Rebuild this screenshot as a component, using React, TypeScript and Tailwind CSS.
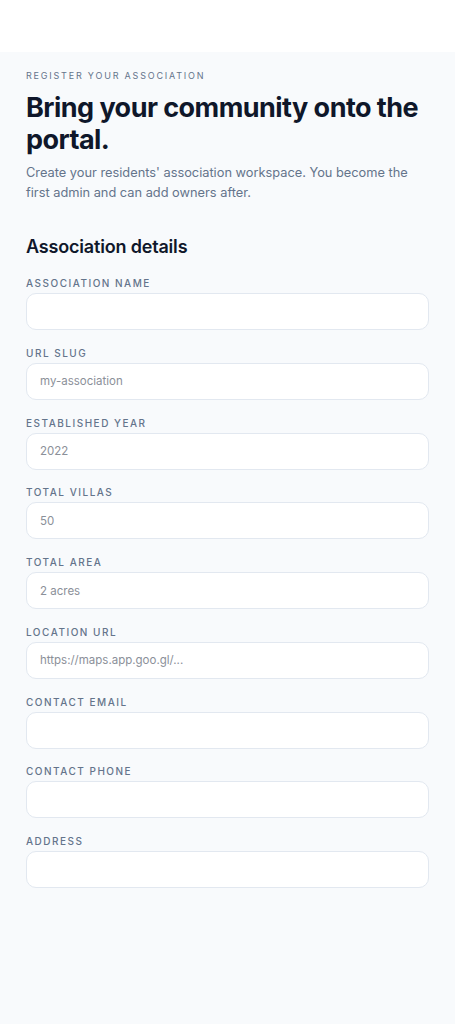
import React from 'react';

type Field = {
    label: string;
    placeholder?: string;
    type?: string;
};

const fields: Field[] = [
    { label: 'Association name' },
    { label: 'URL slug', placeholder: 'my-association' },
    { label: 'Established year', placeholder: '2022' },
    { label: 'Total villas', placeholder: '50' },
    { label: 'Total area', placeholder: '2 acres' },
    { label: 'Location URL', placeholder: 'https://maps.app.goo.gl/...' },
    { label: 'Contact email', type: 'email' },
    { label: 'Contact phone', type: 'tel' },
    { label: 'Address' },
];

export default function App() {
    return (
        <div className="min-h-screen bg-[#f8fafc] flex flex-col" style={{ fontFamily: 'Inter, "Noto Sans", sans-serif' }}>
            {/* top bar (empty) */}
            <header className="h-[52px] bg-white shrink-0" />

            <main className="flex-1 px-[26px] pt-[16px] pb-10">
                <p className="text-[9px] leading-4 uppercase tracking-[0.2em] text-[#64748b]">
                    Register your association
                </p>
                <h1 className="mt-2 text-[27px] leading-8 font-bold tracking-[-0.02em] text-[#0f172a]">
                    Bring your community onto the portal.
                </h1>
                <p className="mt-[7px] text-[12.8px] leading-5 text-[#64748b]">
                    Create your residents' association workspace. You become the first admin and can add owners after.
                </p>

                <h2 className="mt-[30px] text-[18px] leading-7 font-semibold tracking-[-0.01em] text-[#0f172a]">
                    Association details
                </h2>

                <form className="mt-[14px] flex flex-col gap-[14.75px]" onSubmit={(e) => e.preventDefault()}>
                    {fields.map((f) => (
                        <label key={f.label} className="flex flex-col gap-[2px]">
                            <span className="text-[10px] leading-4 font-medium uppercase tracking-[0.15em] text-[#64748b]">
                                {f.label}
                            </span>
                            <input
                                type={f.type || 'text'}
                                placeholder={f.placeholder}
                                className="h-[37px] w-full rounded-[10px] border border-[#e2e8f0] bg-white px-[13px] text-[11.5px] text-[#0f172a] placeholder:text-[#8b9099] outline-none"
                            />
                        </label>
                    ))}
                </form>
            </main>
        </div>
    );
}
